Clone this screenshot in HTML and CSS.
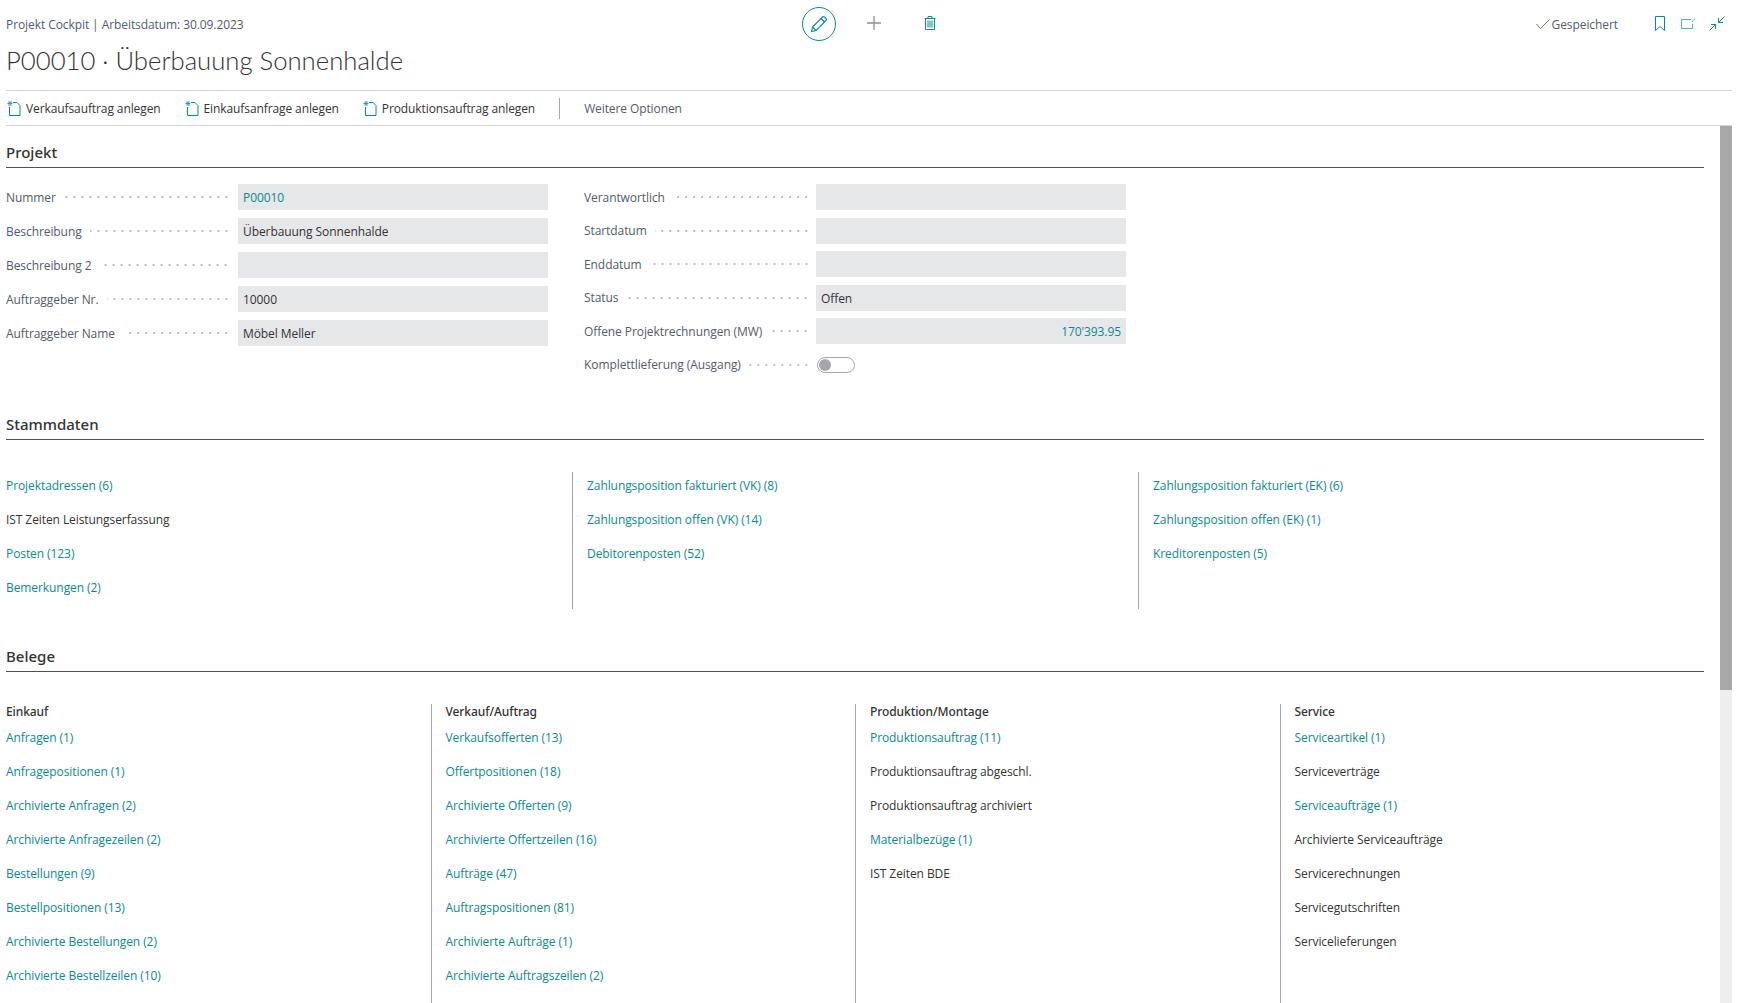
FILE: index.html
```html
<!DOCTYPE html>
<html lang="de">
<head>
    <meta charset="UTF-8">
    <title>Projekt Cockpit</title>
    <link rel="stylesheet" href="styles.css">
</head>
<body>
    <div class="page">
        <header class="top">
            <div class="top-left">
                <div class="crumb">Projekt Cockpit | Arbeitsdatum: 30.09.2023</div>
                <h1>P00010 · Überbauung Sonnenhalde</h1>
            </div>
            <div class="top-mid">
                <span class="edit-btn">
                    <svg width="18" height="18" viewBox="0 0 18 18" fill="none" stroke="#0a8a8f" stroke-width="1.1"><path d="M1.5 16.5l1-4.5L12.5 2a1.4 1.4 0 0 1 2 0l1.5 1.5a1.4 1.4 0 0 1 0 2L6 15.5z"/><path d="M2.5 12L6 15.5M11 3.5l3.5 3.5"/></svg>
                </span>
                <svg class="plus" width="14" height="14" viewBox="0 0 14 14" stroke="#8a8f98" stroke-width="1.3"><path d="M7 0v14M0 7h14"/></svg>
                <svg class="trash" width="12" height="14" viewBox="0 0 12 14" fill="none" stroke="#0a8a8f"><path d="M.5 2.5h11M4 2.5V.5h4v2M1.5 2.5v11h9v-11M4 4.5v7M6 4.5v7M8 4.5v7"/></svg>
            </div>
            <div class="top-right">
                <svg class="check" width="14" height="10" viewBox="0 0 14 10" fill="none" stroke="#6b7280"><path d="M.5 5l4 4.5L13.5.5"/></svg>
                <span class="saved">Gespeichert</span>
                <svg class="tool" width="10" height="15" viewBox="0 0 10 15" fill="none" stroke="#0a8a8f"><path d="M.5.5h9v14L5 10.5.5 14.5z"/></svg>
                <svg class="tool open" width="15" height="11" viewBox="0 0 15 11" fill="none" stroke="#4fb0b8"><path d="M10 1.5H.5v9h11V6M11 4l3-3.5"/></svg>
                <svg class="tool arrows" width="16" height="15" viewBox="0 0 16 15" fill="none" stroke="#0a8a8f"><path d="M15.5.5l-6 6M9.5 2v4.5H14M.5 14.5l6-6M2 8.5h4.5V13"/></svg>
            </div>
        </header>

        <nav class="actions">
            <a class="action"><svg width="14" height="15" viewBox="0 0 14 15" fill="none"><path d="M6 1.5h4l3 3v10H2.5V6" stroke="#0a8a8f"/><path d="M3 0v5M.5 2.5h5M1.2.8l3.6 3.4M4.8.8L1.2 4.2" stroke="#2f9ea6"/></svg>Verkaufsauftrag anlegen</a>
            <a class="action"><svg width="14" height="15" viewBox="0 0 14 15" fill="none"><path d="M6 1.5h4l3 3v10H2.5V6" stroke="#0a8a8f"/><path d="M3 0v5M.5 2.5h5M1.2.8l3.6 3.4M4.8.8L1.2 4.2" stroke="#2f9ea6"/></svg>Einkaufsanfrage anlegen</a>
            <a class="action"><svg width="14" height="15" viewBox="0 0 14 15" fill="none"><path d="M6 1.5h4l3 3v10H2.5V6" stroke="#0a8a8f"/><path d="M3 0v5M.5 2.5h5M1.2.8l3.6 3.4M4.8.8L1.2 4.2" stroke="#2f9ea6"/></svg>Produktionsauftrag anlegen</a>
            <span class="action-sep"></span>
            <a class="action more">Weitere Optionen</a>
        </nav>

        <div class="content">
            <main class="main">
                <h2 class="section-title">Projekt</h2>
                <section class="form">
                    <div class="form-col">
                        <div class="field"><span class="label">Nummer</span><i class="dots"></i><span class="value link">P00010</span></div>
                        <div class="field"><span class="label">Beschreibung</span><i class="dots"></i><span class="value">Überbauung Sonnenhalde</span></div>
                        <div class="field"><span class="label">Beschreibung 2</span><i class="dots"></i><span class="value"></span></div>
                        <div class="field"><span class="label">Auftraggeber Nr.</span><i class="dots"></i><span class="value">10000</span></div>
                        <div class="field"><span class="label">Auftraggeber Name</span><i class="dots"></i><span class="value">Möbel Meller</span></div>
                    </div>
                    <div class="form-col right">
                        <div class="field"><span class="label">Verantwortlich</span><i class="dots"></i><span class="value"></span></div>
                        <div class="field"><span class="label">Startdatum</span><i class="dots"></i><span class="value"></span></div>
                        <div class="field"><span class="label">Enddatum</span><i class="dots"></i><span class="value"></span></div>
                        <div class="field"><span class="label">Status</span><i class="dots"></i><span class="value">Offen</span></div>
                        <div class="field"><span class="label">Offene Projektrechnungen (MW)</span><i class="dots"></i><span class="value link num">170'393.95</span></div>
                        <div class="field"><span class="label">Komplettlieferung (Ausgang)</span><i class="dots"></i><span class="toggle"></span></div>
                    </div>
                </section>

                <h2 class="section-title">Stammdaten</h2>
                <section class="cols three">
                    <div class="col">
                        <a class="link">Projektadressen (6)</a>
                        <span>IST Zeiten Leistungserfassung</span>
                        <a class="link">Posten (123)</a>
                        <a class="link">Bemerkungen (2)</a>
                    </div>
                    <div class="col">
                        <a class="link">Zahlungsposition fakturiert (VK) (8)</a>
                        <a class="link">Zahlungsposition offen (VK) (14)</a>
                        <a class="link">Debitorenposten (52)</a>
                    </div>
                    <div class="col">
                        <a class="link">Zahlungsposition fakturiert (EK) (6)</a>
                        <a class="link">Zahlungsposition offen (EK) (1)</a>
                        <a class="link">Kreditorenposten (5)</a>
                    </div>
                </section>

                <h2 class="section-title">Belege</h2>
                <section class="cols four">
                    <div class="col">
                        <h3>Einkauf</h3>
                        <a class="link">Anfragen (1)</a>
                        <a class="link">Anfragepositionen (1)</a>
                        <a class="link">Archivierte Anfragen (2)</a>
                        <a class="link">Archivierte Anfragezeilen (2)</a>
                        <a class="link">Bestellungen (9)</a>
                        <a class="link">Bestellpositionen (13)</a>
                        <a class="link">Archivierte Bestellungen (2)</a>
                        <a class="link">Archivierte Bestellzeilen (10)</a>
                    </div>
                    <div class="col">
                        <h3>Verkauf/Auftrag</h3>
                        <a class="link">Verkaufsofferten (13)</a>
                        <a class="link">Offertpositionen (18)</a>
                        <a class="link">Archivierte Offerten (9)</a>
                        <a class="link">Archivierte Offertzeilen (16)</a>
                        <a class="link">Aufträge (47)</a>
                        <a class="link">Auftragspositionen (81)</a>
                        <a class="link">Archivierte Aufträge (1)</a>
                        <a class="link">Archivierte Auftragszeilen (2)</a>
                    </div>
                    <div class="col">
                        <h3>Produktion/Montage</h3>
                        <a class="link">Produktionsauftrag (11)</a>
                        <span>Produktionsauftrag abgeschl.</span>
                        <span>Produktionsauftrag archiviert</span>
                        <a class="link">Materialbezüge (1)</a>
                        <span>IST Zeiten BDE</span>
                    </div>
                    <div class="col">
                        <h3>Service</h3>
                        <a class="link">Serviceartikel (1)</a>
                        <span>Serviceverträge</span>
                        <a class="link">Serviceaufträge (1)</a>
                        <span>Archivierte Serviceaufträge</span>
                        <span>Servicerechnungen</span>
                        <span>Servicegutschriften</span>
                        <span>Servicelieferungen</span>
                    </div>
                </section>
            </main>
            <div class="scrollbar"><div class="thumb"></div></div>
        </div>
    </div>
</body>
</html>
```

FILE: styles.css
```css
* { box-sizing: border-box; }
html, body { margin: 0; height: 100%; overflow: hidden; background: #fff; }
body { font-family: "Open Sans", "Noto Sans", sans-serif; font-size: 12px; letter-spacing: -0.08px; color: #333; }
.page { height: 1003px; padding: 0 11px 0 6px; display: flex; flex-direction: column; }

.top { height: 91px; display: flex; border-bottom: 1px solid #d4d4d4; }
.top-left { width: 796px; }
.crumb { margin-top: 16px; line-height: 18px; color: #505c6d; }
h1 { margin: 8px 0 0; font-family: Lato, Roboto, sans-serif; font-size: 25.7px; line-height: 36px; font-weight: 300; letter-spacing: 0; color: #333; }
.top-mid { display: flex; align-items: center; height: 48px; }
.edit-btn { width: 34px; height: 34px; border: 1px solid #0a8a8f; border-radius: 50%; display: flex; align-items: center; justify-content: center; }
.plus { margin: 0 0 2px 31px; }
.trash { margin: 0 0 2px 43px; }
.top-right { flex: 1; display: flex; justify-content: flex-end; align-items: center; height: 48px; padding-right: 7px; }
.check { margin-right: 2px; }
.saved { color: #505c6d; margin-right: 20px; }
.tool { margin: 0 0 2px 17px; }
.tool.open { margin-left: 16px; }
.tool.arrows { margin-left: 13px; }

.actions { height: 35px; display: flex; align-items: center; padding-top: 1px; border-bottom: 1px solid #d4d4d4; color: #333; letter-spacing: -0.1px; }
.action { display: flex; align-items: center; gap: 5px; margin-right: 23px; }
.action svg { margin-left: 1px; }
.action-sep { width: 1px; height: 21px; background: #a6a6a6; margin: 0 24px 0 1px; }
.action.more { color: #505c6d; }

.content { flex: 1; display: flex; min-height: 0; }
.main { flex: 1; padding-right: 16px; min-width: 0; }
.scrollbar { width: 12px; background: #eee; }
.thumb { height: 564px; background: #a8a8a8; }

.section-title { margin: 0; height: 26px; font-family: "Noto Sans", "Open Sans", sans-serif; font-size: 15px; line-height: 21px; font-weight: 500; letter-spacing: 0; color: #333; border-bottom: 1px solid #505050; }
.main > .section-title:first-child { margin-top: 16px; }

.form { display: flex; height: 246px; padding-top: 16px; }
.form-col { width: 542px; display: flex; flex-direction: column; gap: 8px; }
.form-col.right { margin-left: 36px; gap: 7.6px; }
.field { display: flex; align-items: center; height: 26px; color: #505c6d; }
.label { margin-right: 8px; white-space: nowrap; }
.dots { flex: 1; height: 2px; margin-right: 8px; background-image: radial-gradient(circle, #b5b9c0 0.7px, transparent 0.8px); background-size: 8px 2px; background-position: right center; }
.right .dots { margin-right: 6px; }
.value { width: 310px; height: 26px; line-height: 27px; padding: 0 5px; background: #e6e7e9; color: #333; }
.value.link { color: #0a8a8f; }
.value.num { text-align: right; }
.toggle { position: relative; width: 38px; height: 16px; margin: 0 271px 0 1px; border: 1px solid #a4a7ad; border-radius: 8px; }
.toggle::before { content: ""; position: absolute; left: 1px; top: 1px; width: 12px; height: 12px; border-radius: 50%; background: #a4a7ad; }

.cols { display: grid; padding-top: 32px; }
.cols.three { grid-template-columns: repeat(3, 1fr); height: 206px; }
.cols.four { grid-template-columns: repeat(4, 1fr); }
.col { display: flex; flex-direction: column; }
.col + .col { border-left: 1px solid #a6a6a6; padding-left: 14px; }
.cols.three .col { height: 137px; }
.cols.four .col { height: 300px; }
.col a, .col span { height: 28px; line-height: 28px; margin-bottom: 6px; white-space: nowrap; color: #333; }
.col .link { color: #0a8a8f; }
h3 { margin: 0; height: 19.5px; font-family: "Noto Sans", "Open Sans", sans-serif; line-height: 15px; font-size: 12px; font-weight: 500; color: #333; }
```
